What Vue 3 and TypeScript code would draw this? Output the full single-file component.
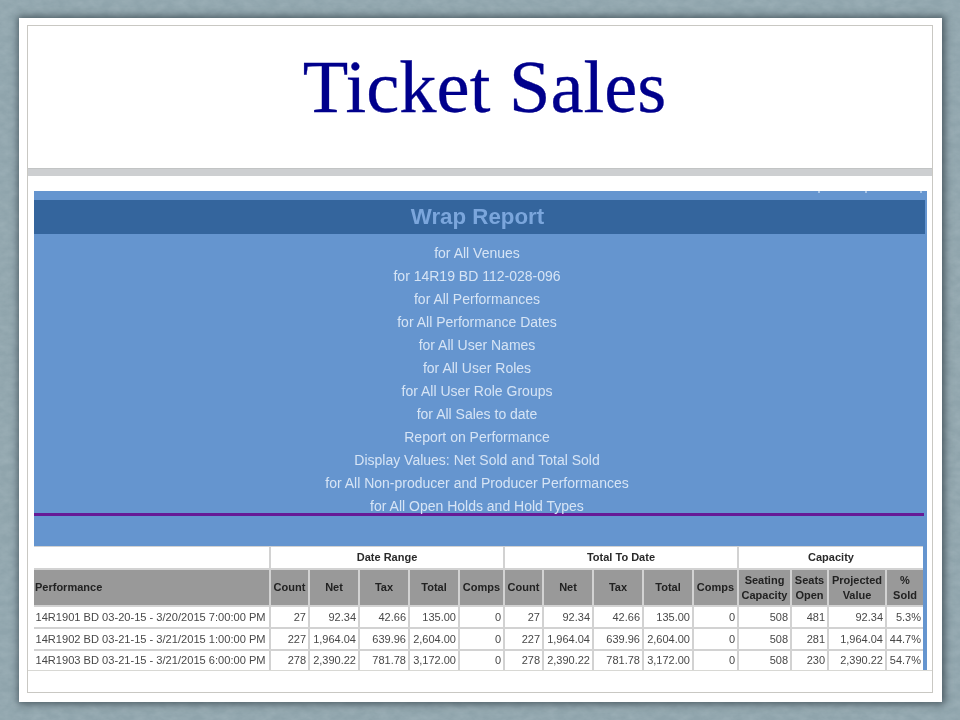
<script setup lang="ts">
const lines: string[] = [
  'for All Venues',
  'for 14R19 BD 112-028-096',
  'for All Performances',
  'for All Performance Dates',
  'for All User Names',
  'for All User Roles',
  'for All User Role Groups',
  'for All Sales to date',
  'Report on Performance',
  'Display Values: Net Sold and Total Sold',
  'for All Non-producer and Producer Performances',
  'for All Open Holds and Hold Types',
]
const metric = ['Count', 'Net', 'Tax', 'Total', 'Comps']
const heads: string[] = [
  'Performance', ...metric, ...metric,
  'Seating Capacity', 'Seats Open', 'Projected Value', '% Sold',
]
const rows: string[][] = [
  ['14R1901 BD 03-20-15 - 3/20/2015 7:00:00 PM', '27', '92.34', '42.66', '135.00', '0', '27', '92.34', '42.66', '135.00', '0', '508', '481', '92.34', '5.3%'],
  ['14R1902 BD 03-21-15 - 3/21/2015 1:00:00 PM', '227', '1,964.04', '639.96', '2,604.00', '0', '227', '1,964.04', '639.96', '2,604.00', '0', '508', '281', '1,964.04', '44.7%'],
  ['14R1903 BD 03-21-15 - 3/21/2015 6:00:00 PM', '278', '2,390.22', '781.78', '3,172.00', '0', '278', '2,390.22', '781.78', '3,172.00', '0', '508', '230', '2,390.22', '54.7%'],
]
</script>

<template>
  <div class="page">
    <svg class="texture" width="960" height="720" aria-hidden="true">
      <filter id="mottle">
        <feTurbulence type="fractalNoise" baseFrequency="0.09 0.14" numOctaves="4" seed="7" />
        <feColorMatrix type="matrix" values="0 0 0 0 0.48  0 0 0 0 0.58  0 0 0 0 0.62  0.45 0 0 0 -0.12" />
      </filter>
      <rect width="960" height="720" filter="url(#mottle)" />
    </svg>
    <main class="slide">
      <div class="frame">
        <header class="title-area">
          <h1>Ticket Sales</h1>
        </header>
        <div class="band"></div>
        <section class="content">
          <div class="report">
            <div class="report-head">
              <div class="clip">
                <i class="speck s1"></i>
                <i class="speck s2"></i>
                <i class="speck s3"></i>
              </div>
              <h2>Wrap Report</h2>
              <ul class="filters">
                <li v-for="line in lines" :key="line">{{ line }}</li>
              </ul>
              <div class="rule"></div>
            </div>
            <div class="table">
              <div class="cell blank"></div>
              <div class="cell group span5">Date Range</div>
              <div class="cell group span5">Total To Date</div>
              <div class="cell group span4">Capacity</div>
              <div
                v-for="(h, i) in heads"
                :key="'h' + i"
                class="cell head"
                :class="{ first: i === 0 }"
              >{{ h }}</div>
              <template v-for="row in rows" :key="row[0]">
                <div
                  v-for="(c, i) in row"
                  :key="i"
                  class="cell data"
                  :class="{ first: i === 0 }"
                >{{ c }}</div>
              </template>
            </div>
          </div>
        </section>
      </div>
    </main>
  </div>
</template>

<style>
html, body { margin: 0; background: #8fa3aa; }
</style>

<style scoped>
.page {
  position: relative;
  width: 960px;
  height: 720px;
  box-sizing: border-box;
  padding: 18px 18px 18px 19px;
  overflow: hidden;
  background: #8fa4ac;
  font-family: "Liberation Sans", Arial, sans-serif;
}
.texture { position: absolute; left: 0; top: 0; }
.slide {
  position: relative;
  height: 684px;
  box-sizing: border-box;
  padding: 7px 9px 9px 8px;
  background: #fff;
  box-shadow: 1px 0 7px 2px rgba(45, 60, 68, 0.7);
}
.frame {
  height: 100%;
  box-sizing: border-box;
  border: 1px solid #c9c8c3;
  display: flex;
  flex-direction: column;
}
.title-area {
  height: 142px;
  display: flex;
  justify-content: center;
  padding-left: 9px;
  box-sizing: border-box;
}
h1 {
  margin: 20px 0 0;
  font-family: "Liberation Serif", "Times New Roman", serif;
  font-weight: 400;
  font-size: 74.5px;
  line-height: 82px;
  color: #00008c;
  -webkit-text-stroke: 0.3px #00008c;
}
.band {
  height: 8px;
  box-sizing: border-box;
  background: #cdcfd1;
  border-top: 1px solid #c2c4c4;
}
.content {
  flex: none;
  height: 495px;
  box-sizing: border-box;
  padding: 15px 5px 0 6px;
  border-bottom: 1px solid #d8d8d4;
}
.report {
  background: #6595cf;
  padding-right: 4px;
  width: 893px;
  height: 479px;
  box-sizing: border-box;
  filter: blur(0.35px);
}
.report-head { height: 355px; }
.clip { height: 9px; position: relative; }
.speck {
  position: absolute;
  top: 0;
  width: 2px;
  height: 2px;
  background: #a9c5e6;
}
.s1 { left: 784px; }
.s2 { left: 831px; }
.s3 { left: 886px; }
h2 {
  margin: 0 -2px 0 0;
  height: 34px;
  background: #34659d;
  color: #7ba6dc;
  font-size: 22.3px;
  line-height: 34px;
  font-weight: 700;
  text-align: center;
  padding-right: 4px;
}
.filters {
  list-style: none;
  margin: 0;
  padding: 8px 3px 0 0;
  text-align: center;
  color: #d6e4f5;
  font-size: 14px;
  line-height: 23px;
}
.rule {
  height: 3px;
  margin-top: -5px;
  background: #661a96;
  margin-right: -1px;
}
.table {
  display: grid;
  grid-template-columns: 235px 37px 48px 48px 48px 43px 37px 48px 48px 48px 43px 51px 35px 56px 36px;
  grid-template-rows: 21px 35px 20px 20px 19px;
  gap: 2px;
  background: #d2d2d2;
  padding: 1px 0 0;
  width: 889px;
  height: 124px;
  box-sizing: border-box;
  font-size: 11px;
  color: #484848;
}
.cell {
  display: flex;
  align-items: center;
  justify-content: center;
  text-align: center;
  line-height: 15px;
  background: #fff;
  padding: 0 2px;
  box-sizing: border-box;
  white-space: nowrap;
}
.span5 { grid-column: span 5; }
.span4 { grid-column: span 4; }
.group { font-weight: 700; color: #2a2a2a; }
.blank { background: #fff; }
.head {
  background: #999;
  font-weight: 700;
  color: #222;
  white-space: normal;
}
.head.first { justify-content: flex-start; padding-left: 1px; }
.data { justify-content: flex-end; }
.data.first { justify-content: flex-start; padding-left: 1.5px; font-size: 11.1px; }
</style>
